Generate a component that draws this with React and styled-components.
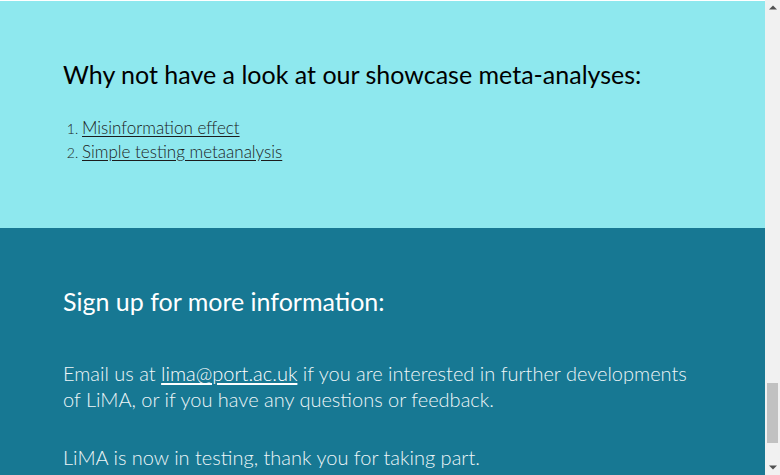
import * as React from 'react'
import styled, { createGlobalStyle } from 'styled-components'

const GlobalStyle = createGlobalStyle`
  html, body {
    margin: 0;
    overflow: hidden;
    background: #ffffff;
    font-family: Lato, "Open Sans", sans-serif;
  }
`

const Window = styled.div`
  display: flex;
  height: 475px;
  overflow: hidden;
`

const Page = styled.main`
  flex: 1;
  min-width: 0;
  padding-top: 1px;
  overflow: hidden;
`

const Section = styled.section`
  background: ${(p) => p.bg};
  padding: 58px 63px ${(p) => p.bottom}px;
`

const Heading = styled.h2`
  margin: 0;
  font-size: 25px;
  line-height: 30px;
  font-weight: 400;
  color: ${(p) => p.color};
`

const List = styled.ol`
  margin: 27px 0 0;
  padding-left: 19px;
  font-size: 17px;
  line-height: 24px;
  font-weight: 300;
  color: #1c1c1c;
  li::marker {
    font-size: 14px;
  }
`

const Item = styled.li`
  a {
    color: inherit;
    text-decoration: underline;
    text-underline-offset: 2px;
  }
`

const Para = styled.p`
  margin: ${(p) => p.top}px 0 0;
  font-size: 20px;
  line-height: 26px;
  font-weight: 300;
  color: #eef6f8;
  a {
    color: #ffffff;
    text-decoration: underline;
    text-underline-offset: 2px;
  }
`

const ScrollBar = styled.div`
  width: 15px;
  flex: none;
  display: flex;
  flex-direction: column;
  background: #f1f1f1;
`

const Arrow = styled.div`
  height: 15px;
  display: flex;
  align-items: center;
  justify-content: center;
  svg {
    display: block;
  }
`

const Track = styled.div`
  flex: 1;
  padding: 368px 2px 0;
`

const Thumb = styled.div`
  height: 60px;
  background: #c1c1c1;
`

const Triangle = ({ down }) => (
  <svg width="8" height="5" viewBox="0 0 8 5">
    <path d={down ? 'M0 0.5h8L4 4.5z' : 'M0 4.5h8L4 0.5z'} fill="#505050" />
  </svg>
)

const App = () => (
  <>
    <GlobalStyle />
    <Window>
      <Page>
        <Section bg="#8ee8ee" bottom={64}>
          <Heading color="#000">Why not have a look at our showcase meta-analyses:</Heading>
          <List>
            <Item>
              <a href="#misinformation">Misinformation effect</a>
            </Item>
            <Item>
              <a href="#simple-testing">Simple testing metaanalysis</a>
            </Item>
          </List>
        </Section>
        <Section bg="#177893" bottom={142}>
          <Heading color="#ffffff">Sign up for more information:</Heading>
          <Para top={44}>
            Email us at <a href="mailto:lima@port.ac.uk">lima@port.ac.uk</a> if you are interested in further
            developments of LiMA, or if you have any questions or feedback.
          </Para>
          <Para top={32}>LiMA is now in testing, thank you for taking part.</Para>
        </Section>
      </Page>
      <ScrollBar>
        <Arrow>
          <Triangle />
        </Arrow>
        <Track>
          <Thumb />
        </Track>
        <Arrow>
          <Triangle down />
        </Arrow>
      </ScrollBar>
    </Window>
  </>
)

export default App
